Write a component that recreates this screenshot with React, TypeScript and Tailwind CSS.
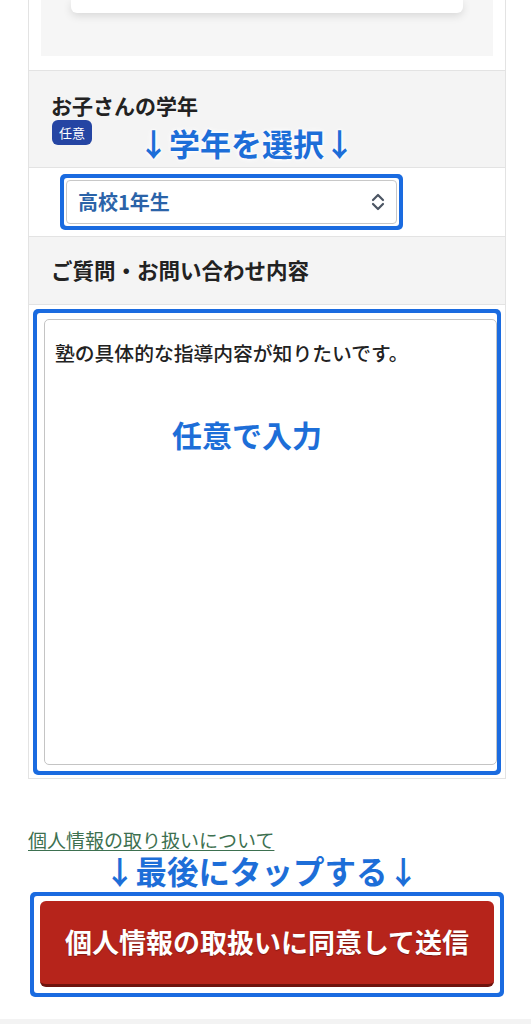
const jp = { fontFamily: '"Noto Sans CJK JP", "Noto Sans", sans-serif' }

function UpDownIcon () {
  return (
    <svg className="w-[16px] h-[18px]" viewBox="0 0 16 18" fill="none" stroke="#4b5563" strokeWidth="2.2" strokeLinecap="round" strokeLinejoin="round">
      <path d="M3 7l5-5 5 5" />
      <path d="M3 11l5 5 5-5" />
    </svg>
  )
}

export default function App () {
  const note = 'font-bold text-[#1d6ed8] [text-shadow:0_0_3px_#fff,0_0_3px_#fff,0_0_6px_#fff]'

  return (
    <div className="w-[531px] h-[1024px] bg-white text-[#222] overflow-hidden flex flex-col" style={jp}>
      {/* form table */}
      <div className="ml-[28px] w-[478px] border-x border-b border-[#e3e3e3]">
        {/* previous block, cut off at the top */}
        <div className="h-[71px] border-b border-[#e3e3e3] px-[12px]">
          <div className="h-[56px] bg-[#f6f6f6] px-[30px]">
            <div className="h-[13px] bg-white rounded-b-md shadow-[0_3px_8px_rgba(0,0,0,0.12)]" />
          </div>
        </div>

        {/* grade label */}
        <div className="h-[97px] bg-[#f4f4f4] border-b border-[#e3e3e3] pl-[22px] pt-[21px]">
          <div className="text-[21px] font-bold leading-[27px]">お子さんの学年</div>
          <div className="flex items-start">
            <span className="ml-[1px] mt-[1px] w-[40px] h-[25px] rounded-md bg-[#2545a3] text-white text-[13px] leading-[25px] text-center">任意</span>
            <span className={`ml-[46px] mt-[7px] text-[31px] leading-[34px] ${note}`}>↓学年を選択↓</span>
          </div>
        </div>

        {/* grade select */}
        <div className="h-[69px] bg-white border-b border-[#e3e3e3] pl-[31px] pt-[6px]">
          <div className="w-[343px] h-[56px] rounded-[5px] bg-[#1a6be0] p-[4px]">
            <div className="h-full bg-white rounded-[3px] p-[2px]">
              <div className="h-full rounded-[4px] border border-[#c8c8c8] flex items-center justify-between pl-[11px] pr-[10px]">
                <span className="text-[20px] font-bold text-[#2b63a8]">高校1年生</span>
                <UpDownIcon />
              </div>
            </div>
          </div>
        </div>

        {/* question label */}
        <div className="h-[68px] bg-[#f4f4f4] border-b border-[#e3e3e3] pl-[22px] flex items-center">
          <span className="text-[21.5px] font-bold">ご質問・お問い合わせ内容</span>
        </div>

        {/* textarea */}
        <div className="bg-white pl-[4px] pr-[4px] pt-[4px] pb-[3px]">
          <div className="h-[466px] rounded-[5px] bg-[#1a6be0] p-[4px]">
            <div className="h-full bg-white rounded-[3px] pt-[6px] pl-[7px] pr-[0px] pb-[6px]">
              <div className="h-full rounded-[5px] border border-[#c4c4c4] pl-[10px] pt-[19px]">
                <div className="text-[19.8px] font-medium leading-[27px]">塾の具体的な指導内容が知りたいです。</div>
                <div className={`mt-[50px] ml-[117px] text-[30px] leading-[36px] ${note}`}>任意で入力</div>
              </div>
            </div>
          </div>
        </div>
      </div>

      {/* footer */}
      <div className="mt-[49px] pl-[28px] h-[24px]">
        <a href="#" className="inline-block text-[19px] leading-[24px] text-[#3d7050] underline underline-offset-2">個人情報の取り扱いについて</a>
      </div>
      <div className={`ml-[104px] mt-[1px] text-[31.5px] leading-[35px] ${note}`}>↓最後にタップする↓</div>
      <div className="ml-[30px] mt-[4px] w-[474px] h-[105px] rounded-[5px] bg-[#1a6be0] p-[4px]">
        <div className="h-full bg-white rounded-[3px] px-[6px] pt-[5px] pb-[6px]">
          <button className="w-full h-full rounded-md bg-[#b6241b] border-b-[3px] border-[#6e130e] text-white text-[27px] font-bold [text-shadow:0_1px_1px_rgba(0,0,0,0.3)]">
            個人情報の取扱いに同意して送信
          </button>
        </div>
      </div>
      <div className="flex-1" />
      <div className="h-[5px] bg-[#f3f3f3]" />
    </div>
  )
}
